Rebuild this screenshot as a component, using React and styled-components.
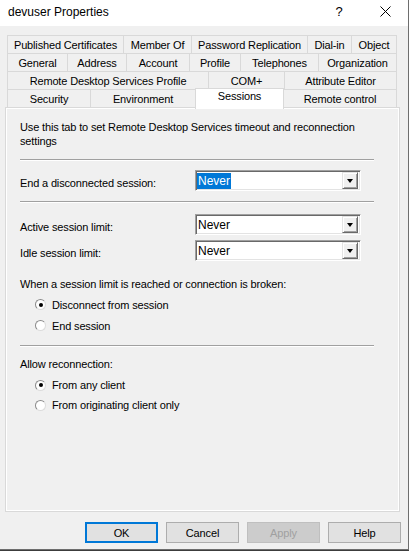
import styled, { createGlobalStyle } from "styled-components";

const GlobalStyle = createGlobalStyle`
    html, body {
        margin: 0;
        padding: 0;
        background: #3c3c3c;
    }
    * {
        box-sizing: border-box;
    }
`

const Window = styled.div`
    width: 409px;
    height: 550px;
    background-color: #f0f0f0;
    border-right: 1px solid #6e6e6e;
    border-bottom: 1px solid #6e6e6e;
    font-family: "Liberation Sans", Arial, sans-serif;
    font-size: 11px;
    letter-spacing: -0.15px;
    color: #000;
    display: flex;
    flex-direction: column;
`
const TitleBar = styled.div`
    height: 26px;
    background-color: #fff;
    display: flex;
    align-items: center;
    padding-left: 8px;
    font-size: 12px;
    letter-spacing: 0;
    flex-shrink: 0;
`
const Title = styled.div`
    flex: 1;
    padding-bottom: 3px;
`
const TitleButton = styled.div`
    width: 46px;
    height: 26px;
    display: flex;
    align-items: center;
    justify-content: center;
    font-size: 13px;
    padding-bottom: 3px;
`
const Body = styled.div`
    padding: 9px 0 0 5px;
`
const TabStrip = styled.div`
    margin-left: 2px;
    width: 390px;
    display: flex;
    flex-direction: column;
`
const TabRow = styled.div`
    display: flex;
    height: 18px;
`
const Tab = styled.div`
    width: ${p => p.w}px;
    height: 18px;
    border-top: 1px solid #d9d9d9;
    border-left: 1px solid #d9d9d9;
    display: flex;
    align-items: center;
    justify-content: center;
    white-space: nowrap;
    &:last-child {
        border-right: 1px solid #d9d9d9;
    }
`
const ActiveTab = styled(Tab)`
    height: 21px;
    margin-top: -1px;
    margin-bottom: -2px;
    background-color: #fff;
    border-right: 1px solid #d9d9d9;
    align-items: flex-start;
    padding-top: 1px;
    z-index: 1;
    & + ${Tab} {
        border-left: none;
    }
`
const Panel = styled.div`
    width: 395px;
    height: 405px;
    border: 1px solid #d9d9d9;
    box-shadow: inset 1px 1px 0 #fff, inset -1px -1px 0 #fff;
    padding: 12px 0 0 14px;
    display: flex;
    flex-direction: column;
`
const Text = styled.div`
    line-height: 14px;
    margin-top: ${p => p.mt || 0}px;
`
const Separator = styled.div`
    width: 354px;
    height: 2px;
    border-top: 1px solid #a0a0a0;
    border-bottom: 1px solid #fff;
    margin-top: ${p => p.mt || 0}px;
`
const FieldRow = styled.div`
    display: flex;
    align-items: center;
    margin-top: ${p => p.mt || 0}px;
`
const Label = styled.div`
    width: 175px;
    padding-top: 4px;
`
const Combo = styled.div`
    width: 166px;
    height: 21px;
    background: #fff;
    border-top: 1px solid #a0a0a0;
    border-left: 1px solid #a0a0a0;
    border-right: 1px solid #fff;
    border-bottom: 1px solid #fff;
    box-shadow: inset 1px 1px 0 #696969, inset -1px -1px 0 #e3e3e3;
    display: flex;
    align-items: center;
    padding: 2px 2px 2px 1px;
`
const ComboValue = styled.div`
    flex: 1;
    display: flex;
    align-items: center;
    height: 100%;
`
const Selected = styled.span`
    background: ${p => p.on ? "#0078d7" : "transparent"};
    color: ${p => p.on ? "#fff" : "#000"};
    padding: 1px 1px 1px 1px;
    line-height: 14px;
    font-size: 12px;
    letter-spacing: 0;
`
const DropButton = styled.div`
    width: 16px;
    height: 17px;
    background: #f0f0f0;
    border-top: 1px solid #e3e3e3;
    border-left: 1px solid #e3e3e3;
    border-right: 1px solid #696969;
    border-bottom: 1px solid #696969;
    box-shadow: inset 1px 1px 0 #fff, inset -1px -1px 0 #a0a0a0;
    display: flex;
    align-items: center;
    justify-content: center;
`
const Arrow = styled.div`
    width: 0;
    height: 0;
    border-left: 3.5px solid transparent;
    border-right: 3.5px solid transparent;
    border-top: 4px solid #000;
    margin-top: 1px;
`
const RadioRow = styled.div`
    display: flex;
    align-items: center;
    height: ${p => p.h}px;
    padding-left: 15px;
`
const RadioCircle = styled.div`
    width: 11px;
    height: 11px;
    border-radius: 50%;
    background: #fff;
    border: 1px solid #8a8a8a;
    border-right-color: #dcdcdc;
    border-bottom-color: #dcdcdc;
    display: flex;
    align-items: center;
    justify-content: center;
    margin-right: 6px;
    &::after {
        content: "";
        width: 4px;
        height: 4px;
        border-radius: 50%;
        background: ${p => p.checked ? "#000" : "transparent"};
    }
`
const ButtonBar = styled.div`
    display: flex;
    justify-content: flex-end;
    gap: 8px;
    width: 396px;
    margin-top: 10px;
`
const Button = styled.div`
    width: 73px;
    height: 21px;
    background: ${p => p.disabled ? "#cccccc" : "#e1e1e1"};
    color: ${p => p.disabled ? "#a0a0a0" : "#000"};
    border: ${p => p.primary ? "2px solid #0078d7" : p.disabled ? "1px solid #bfbfbf" : "1px solid #adadad"};
    display: flex;
    align-items: center;
    justify-content: center;
    font-size: 11px;
`

const tabRows = [
    [["Published Certificates", 116], ["Member Of", 68], ["Password Replication", 116], ["Dial-in", 44], ["Object", 46]],
    [["General", 60], ["Address", 59], ["Account", 63], ["Profile", 51], ["Telephones", 78], ["Organization", 79]],
    [["Remote Desktop Services Profile", 201], ["COM+", 76], ["Attribute Editor", 113]],
    [["Security", 83], ["Environment", 105], ["Sessions", 89, true], ["Remote control", 113]],
]

const ComboBox = ({ value, selected }) => (
    <Combo>
        <ComboValue>
            <Selected on={selected}>{value}</Selected>
        </ComboValue>
        <DropButton><Arrow /></DropButton>
    </Combo>
)

const Radio = ({ label, checked, h }) => (
    <RadioRow h={h}>
        <RadioCircle checked={checked} />
        {label}
    </RadioRow>
)

const App = () => {
    return (
        <Window>
            <GlobalStyle />
            <TitleBar>
                <Title>devuser Properties</Title>
                <TitleButton>?</TitleButton>
                <TitleButton>
                    <svg width="11" height="11" viewBox="0 0 11 11">
                        <path d="M0.5 0.5 L10.5 10.5 M10.5 0.5 L0.5 10.5" stroke="#000" strokeWidth="1" />
                    </svg>
                </TitleButton>
            </TitleBar>
            <Body>
                <TabStrip>
                    {tabRows.map((row, i) => (
                        <TabRow key={i}>
                            {row.map(([name, w, active]) => active
                                ? <ActiveTab key={name} w={w}>{name}</ActiveTab>
                                : <Tab key={name} w={w}>{name}</Tab>
                            )}
                        </TabRow>
                    ))}
                </TabStrip>
                <Panel>
                    <Text>Use this tab to set Remote Desktop Services timeout and reconnection<br />settings</Text>
                    <Separator mt={11} />
                    <FieldRow mt={9}>
                        <Label>End a disconnected session:</Label>
                        <ComboBox value="Never" selected />
                    </FieldRow>
                    <Separator mt={10} />
                    <FieldRow mt={11}>
                        <Label>Active session limit:</Label>
                        <ComboBox value="Never" />
                    </FieldRow>
                    <FieldRow mt={5}>
                        <Label>Idle session limit:</Label>
                        <ComboBox value="Never" />
                    </FieldRow>
                    <Text mt={16}>When a session limit is reached or connection is broken:</Text>
                    <div style={{ marginTop: 3 }}>
                        <Radio label="Disconnect from session" checked h={21} />
                        <Radio label="End session" h={21} />
                    </div>
                    <Separator mt={9} />
                    <Text mt={10}>Allow reconnection:</Text>
                    <div style={{ marginTop: 4 }}>
                        <Radio label="From any client" checked h={20} />
                        <Radio label="From originating client only" h={20} />
                    </div>
                </Panel>
                <ButtonBar>
                    <Button primary>OK</Button>
                    <Button>Cancel</Button>
                    <Button disabled>Apply</Button>
                    <Button>Help</Button>
                </ButtonBar>
            </Body>
        </Window>
    )
}

export default App;
